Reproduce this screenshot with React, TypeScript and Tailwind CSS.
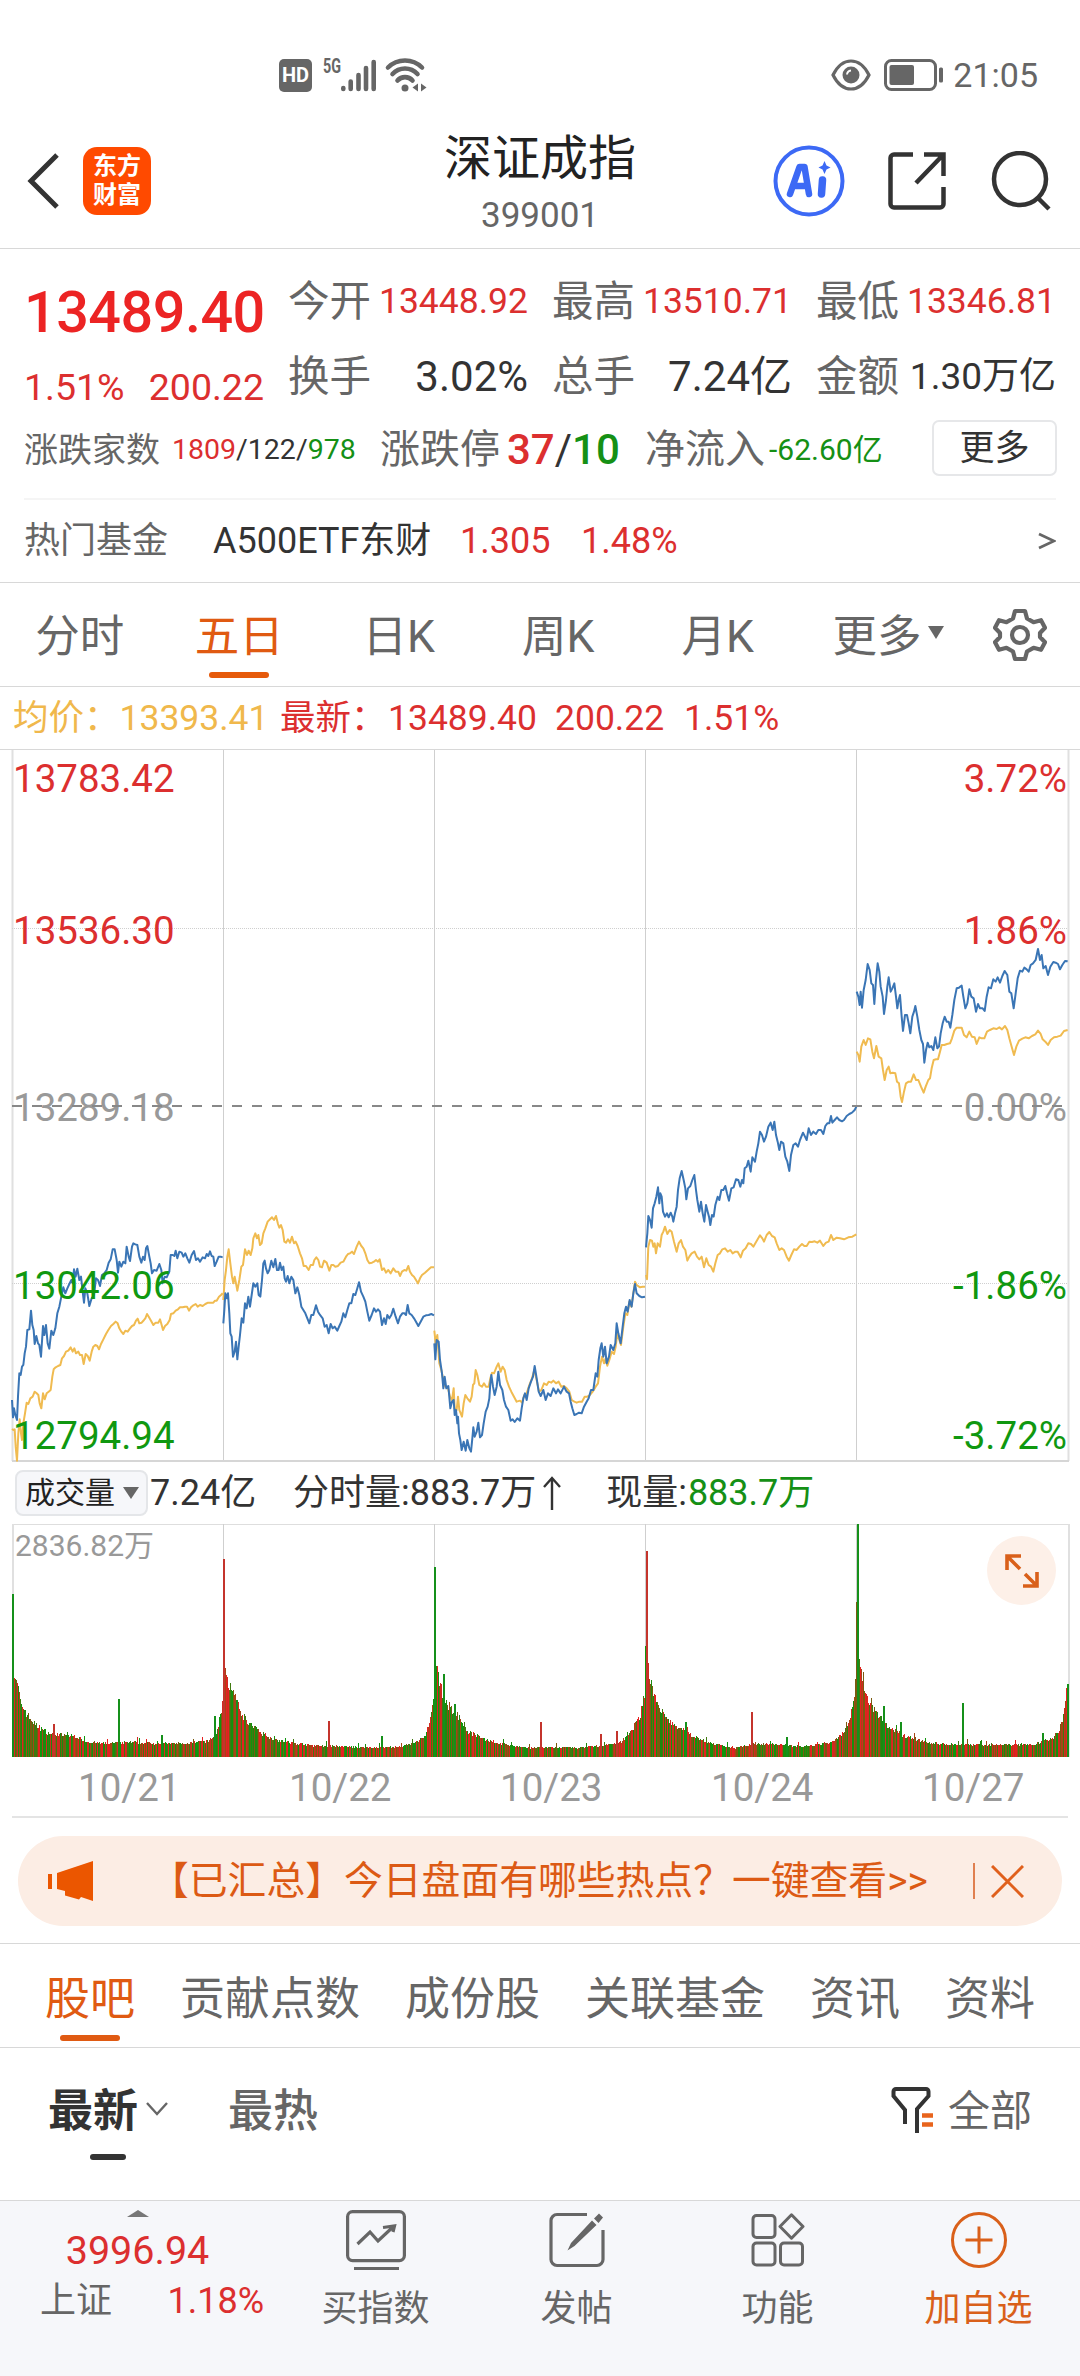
import React from "react";

const FONT = 'Roboto, "Noto Sans CJK SC", sans-serif';

type Segment = { x: number; y: number; price: string; avg: string };

/* Each trading day: intraday price and running average, in third-pixel units. */
const SEGMENTS: Segment[] = [
  {
    x: 0,
    y: 331,
    price:
      "36,960 39,1012 42,985 46,1005 51,1020 54,950 58,880 62,885 66,860 70,855 74,820 78,800 82,750 88,748 93,692 97,735 101,750 104,792 109,768 114,790 118,795 123,830 129,738 133,765 138,735 143,790 148,806 154,752 160,765 166,745 172,700 178,680 184,650 190,622 196,640 202,625 208,612 214,600 218,610 222,568 227,590 232,566 238,600 243,590 248,635 252,668 256,625 262,640 268,678 275,655 282,645 288,595 294,600 300,618 306,585 313,580 320,570 326,548 332,538 338,508 344,508 350,540 354,578 358,545 364,560 370,545 376,550 380,500 386,530 390,543 396,500 400,490 406,493 412,495 418,530 424,548 429,530 434,540 438,505 442,498 448,530 452,550 456,580 462,570 470,572 478,552 484,570 488,610 494,590 500,592 508,575 512,525 518,525 523,528 527,512 532,535 538,515 545,518 550,530 556,520 562,535 568,548 575,525 582,513 588,540 594,535 600,545 608,532 615,535 620,522 625,528 630,514 635,528 640,530 644,558 650,545 656,530 662,530 668,532",
    avg:
      "36,1047 40,1050 44,1048 47,1100 51,1142 55,1060 59,1018 63,1060 66,1080 70,1030 75,1000 80,968 85,972 91,955 98,950 104,935 110,940 115,945 119,970 124,985 129,940 134,958 140,940 146,935 152,930 157,890 161,868 167,862 174,858 181,855 186,835 192,828 198,815 205,812 212,802 218,815 223,805 228,820 235,815 240,825 246,825 251,852 257,822 263,828 269,842 275,815 280,800 286,795 292,798 297,808 303,792 310,778 318,762 325,750 333,738 340,732 347,725 353,730 358,745 364,755 370,762 376,752 383,755 390,745 396,738 402,735 408,722 413,716 418,730 425,728 432,720 436,715 441,702 447,712 453,722 460,735 467,728 475,728 480,718 485,735 489,750 495,738 502,732 509,720 513,702 520,700 527,692 534,688 540,682 548,682 555,680 561,680 567,692 573,682 580,676 587,672 593,680 600,675 608,678 616,672 624,668 632,668 640,668 645,662 650,662 657,650 663,645 668,640",
  },
  {
    x: 0,
    y: 331,
    price:
      "670,730 673,690 676,640 680,655 684,640 688,700 691,760 695,770 699,830 704,815 708,785 712,838 716,800 720,765 725,715 730,728 735,670 740,685 745,650 750,680 755,645 760,610 766,620 772,610 776,645 781,650 786,600 790,550 794,542 798,565 803,580 808,570 814,542 820,562 826,537 831,570 836,570 840,548 845,570 850,560 854,595 858,605 863,588 868,610 874,590 880,600 886,640 892,622 898,645 904,680 910,690 916,700 922,715 928,730 934,705 940,705 948,676 954,695 960,705 968,715 974,740 980,735 986,760 992,732 998,745 1004,740 1012,752 1018,738 1024,725 1030,700 1036,712 1042,690 1048,670 1054,670 1060,642 1066,645 1072,625 1077,607 1083,635 1090,650 1096,665 1102,695 1108,722 1115,705 1122,685 1128,695 1134,688 1140,695 1146,735 1152,715 1157,732 1162,705 1168,715 1174,705 1180,686 1187,710 1194,730 1200,710 1207,700 1213,700 1218,705 1223,675 1228,700 1235,705 1242,715 1248,725 1255,738 1262,725 1270,710 1278,706 1286,705 1294,702 1302,706",
    avg:
      "670,660 674,600 678,570 682,530 686,508 691,550 696,590 700,610 704,590 708,610 712,632 718,600 724,560 729,555 735,508 741,525 746,512 752,525 757,505 760,475 766,460 771,475 775,465 780,495 785,490 790,460 796,445 803,425 810,418 816,412 822,420 828,408 834,432 838,443 843,435 848,450 853,485 858,488 864,478 870,488 876,470 882,490 887,485 893,498 900,520 906,535 911,558 918,558 926,570 932,555 939,555 943,540 949,532 955,540 960,560 966,562 972,542 980,548 988,572 994,555 1000,555 1006,560 1014,558 1022,548 1030,545 1038,530 1044,522 1050,520 1056,515 1062,522 1070,500 1077,485 1084,498 1090,505 1096,520 1102,540 1108,550 1116,548 1122,545 1128,540 1134,545 1139,538 1146,570 1152,565 1158,578 1165,570 1172,580 1180,565 1187,575 1195,575 1200,588 1206,575 1213,570 1219,572 1225,558 1230,575 1236,585 1242,590 1248,600 1254,610 1260,595 1266,585 1275,578 1284,570 1293,562 1302,562",
  },
  {
    x: 420,
    y: 331,
    price:
      "43,790 46,838 50,780 56,785 60,840 66,880 70,925 74,890 79,925 85,918 91,985 96,965 101,960 104,1005 108,990 112,1030 114,1010 117,1060 121,1080 125,1110 131,1085 137,1112 142,1080 148,1105 153,1115 157,1075 160,1042 164,1070 170,1055 175,1028 180,1072 186,1065 191,1030 197,995 203,980 208,955 211,910 214,885 219,920 224,945 230,920 235,875 240,915 247,930 252,960 258,980 265,990 272,1022 278,1018 284,1026 292,1015 300,1022 305,985 310,955 315,940 320,960 326,925 333,905 339,890 344,858 350,895 356,935 362,948 370,930 377,960 384,940 392,948 400,925 408,940 414,928 422,940 432,920 440,935 447,940 452,965 457,985 463,1005 470,1002 477,998 485,1000 492,980 500,965 506,955 513,930 520,930 527,880 532,890 536,840 541,805 545,790 550,830 555,800 560,850 567,830 572,795 580,810 586,790 590,730 595,760 602,790 608,740 613,700 618,680 623,695 629,660 635,680 640,640 645,612 650,640 658,648 666,652 675,650",
    avg:
      "43,752 47,790 52,765 58,850 64,870 70,900 76,920 84,925 90,950 96,960 101,925 104,985 110,990 114,950 118,990 126,1010 131,970 136,945 142,955 150,965 155,950 159,915 163,910 167,870 172,885 178,915 186,920 192,910 198,920 206,920 211,895 216,878 222,880 230,860 235,850 242,875 248,860 254,870 260,900 267,920 274,935 282,950 290,965 300,962 306,968 313,945 320,940 328,915 336,895 343,870 350,900 357,935 364,930 372,910 380,915 386,905 394,908 400,902 408,910 416,905 424,920 432,918 440,925 448,935 455,960 463,965 470,968 478,965 486,965 494,950 502,950 510,945 518,935 527,920 534,910 540,860 546,830 552,850 557,835 562,857 568,840 575,815 582,822 587,800 592,760 598,780 603,795 610,740 616,700 622,705 628,665 634,680 640,640 645,605 650,615 660,622 668,620 675,620",
  },
  {
    x: 420,
    y: 331,
    price:
      "678,502 682,460 685,408 690,420 695,443 699,385 704,370 709,350 714,322 718,370 721,340 725,350 729,395 735,410 741,400 746,412 752,398 757,410 760,425 765,400 770,380 774,330 779,295 785,273 791,300 796,325 799,358 804,325 811,318 817,300 823,285 828,330 832,360 838,395 843,365 848,400 853,425 858,375 863,395 867,410 871,435 876,405 881,410 886,375 893,350 898,360 904,330 910,330 916,318 921,340 927,362 934,325 941,322 948,298 955,300 961,320 966,300 970,310 974,265 980,260 985,242 992,275 997,232 1005,245 1010,215 1015,190 1020,155 1026,165 1032,185 1038,170 1045,140 1052,128 1058,150 1063,125 1068,165 1073,185 1078,210 1083,185 1090,190 1096,230 1102,245 1108,273 1113,225 1120,195 1127,190 1134,200 1140,180 1149,158 1155,170 1160,180 1166,145 1173,165 1180,155 1188,162 1195,150 1203,150 1210,162 1216,138 1222,130 1228,130 1233,108 1237,128 1244,120 1251,112 1258,120 1266,124 1272,120 1280,108 1288,102 1296,98 1304,90 1309,80",
    avg:
      "678,585 681,598 685,500 690,480 696,482 700,500 704,490 708,520 713,490 720,500 725,465 730,455 735,440 742,462 749,450 755,455 762,485 770,515 776,490 783,480 789,500 796,510 802,542 808,530 815,520 824,515 831,530 838,538 845,530 852,562 859,535 866,555 873,560 880,575 886,550 893,525 900,520 907,508 915,505 923,515 931,510 938,520 946,515 953,515 962,532 969,512 977,505 985,490 993,492 1000,500 1006,490 1013,478 1020,466 1027,475 1032,485 1040,465 1048,456 1056,468 1064,472 1070,490 1078,510 1085,505 1092,510 1100,530 1107,542 1114,525 1122,508 1130,510 1138,500 1146,492 1153,498 1160,498 1168,485 1176,486 1184,484 1192,488 1200,482 1210,498 1218,488 1226,485 1233,465 1240,480 1250,473 1260,475 1272,478 1285,472 1297,470 1309,463",
  },
  {
    x: 640,
    y: 151,
    price:
      "650,275 655,290 659,315 662,275 666,323 671,270 677,240 683,192 689,210 694,250 699,255 703,312 708,240 713,190 718,215 722,260 728,290 732,342 738,300 742,260 746,232 752,275 757,265 763,250 768,290 772,325 776,300 780,285 785,350 789,393 795,345 801,345 806,370 811,400 817,350 822,335 826,318 832,350 838,390 844,420 849,432 853,488 858,450 863,428 868,442 874,438 880,450 886,412 892,445 897,440 902,400 908,370 914,350 920,365 926,365 931,383 937,345 943,300 950,265 957,263 965,257 970,290 976,325 982,310 988,268 994,290 1001,295 1008,335 1014,312 1020,325 1028,325 1034,333 1040,290 1046,262 1053,265 1060,238 1067,245 1073,232 1080,248 1087,228 1094,213 1102,225 1108,275 1114,280 1121,325 1127,280 1133,235 1140,212 1147,215 1153,203 1160,208 1166,215 1172,195 1179,190 1187,180 1194,147 1200,180 1205,165 1210,205 1217,198 1224,225 1231,200 1240,186 1247,188 1254,192 1260,208 1267,195 1275,183 1283,184",
    avg:
      "650,455 655,465 659,485 664,440 671,420 677,435 684,415 691,418 697,455 702,475 709,438 716,470 724,475 729,510 734,540 740,510 746,500 751,520 758,518 766,520 771,545 777,550 782,590 786,606 792,575 798,550 806,545 813,545 821,523 828,540 835,540 843,560 851,578 857,560 865,540 870,535 875,505 881,480 888,478 894,478 900,455 905,435 913,435 921,432 930,430 936,415 943,392 950,383 958,383 965,383 972,405 980,412 988,395 996,410 1004,412 1010,432 1018,412 1025,415 1033,415 1041,395 1050,390 1060,385 1070,387 1078,382 1086,388 1095,378 1102,390 1108,415 1115,440 1122,465 1129,440 1137,422 1147,416 1156,412 1166,415 1176,408 1186,403 1194,392 1202,402 1208,418 1216,425 1224,435 1232,420 1242,412 1252,410 1262,407 1272,393 1283,390",
  },
];

const GRID_X = [12, 223, 434, 645, 856, 1068];

/* Volume envelope per day: [offset from day start, bar height]. */
const ENVELOPES: number[][][] = [
  [[0, 91], [2, 79], [4, 70], [6, 66], [8, 52], [12, 46], [16, 39], [24, 30], [36, 23], [50, 21], [62, 20], [74, 15], [90, 13], [120, 14], [150, 13], [175, 13], [195, 15], [204, 22], [209, 45], [211, 60]],
  [[0, 110], [2, 90], [4, 74], [8, 65], [12, 55], [18, 42], [26, 32], [36, 24], [48, 18], [65, 14], [90, 11], [120, 10], [150, 9], [178, 10], [192, 14], [202, 20], [207, 36], [211, 57]],
  [[0, 105], [2, 86], [4, 75], [8, 62], [12, 52], [18, 45], [26, 37], [34, 24], [48, 18], [65, 13], [90, 9], [120, 9], [150, 9], [175, 12], [190, 16], [200, 30], [206, 40], [211, 66]],
  [[0, 118], [2, 100], [4, 80], [8, 60], [14, 47], [20, 37], [30, 30], [42, 23], [55, 17], [70, 12], [90, 9], [110, 13], [130, 12], [160, 10], [185, 14], [199, 24], [206, 42], [211, 77]],
  [[0, 163], [1, 111], [3, 97], [6, 76], [10, 60], [15, 50], [22, 40], [32, 29], [46, 21], [60, 17], [75, 13], [105, 12], [140, 12], [175, 12], [195, 17], [203, 25], [208, 45], [211, 70]],
];

/* Isolated volume spikes: [x, height, is up]. */
const SPIKES: [number, number, boolean][] = [
  [12, 163, false], [118, 58, false], [161, 22, false], [214, 41, false], [53, 33, true],
  [223, 198, true], [328, 36, true], [381, 21, false], [236, 57, false],
  [434, 190, false], [443, 83, false], [454, 53, false], [540, 35, true], [600, 23, true], [616, 26, true],
  [646, 206, true], [685, 35, false], [751, 45, true], [786, 20, false],
  [857, 233, false], [883, 51, false], [900, 35, false], [962, 54, false], [1042, 24, false], [1067, 73, false],
];

function envelopeAt(points: number[][], d: number) {
  for (let i = 1; i < points.length; i++) {
    const [x0, h0] = points[i - 1];
    const [x1, h1] = points[i];
    if (d <= x1) return h0 + ((h1 - h0) * (d - x0)) / (x1 - x0);
  }
  return points[points.length - 1][1];
}

function buildVolume() {
  const bars: { x: number; h: number; c: string }[] = [];
  let seed = 7;
  const rand = () => {
    seed = (seed * 16807) % 2147483647;
    return seed / 2147483647;
  };
  const colors = ["#d02a20", "#0f960c", "#7a5a10", "#a84416", "#3f7a10", "#e62020", "#1c8a0e"];
  ENVELOPES.forEach((env, day) => {
    for (let d = 0; d < 211; d++) {
      const h = envelopeAt(env, d) * (0.94 + rand() * 0.2) + (rand() > 0.93 ? 4 : 0);
      bars.push({ x: 12 + day * 211 + d, h, c: colors[Math.floor(rand() * colors.length)] });
    }
  });
  return bars;
}

const VOLUME = buildVolume();

function StatusBar() {
  return (
    <div className="flex h-[110px] items-center pt-[40px] pl-[279px] pr-[42px] text-[#666]">
      <div className="flex h-[33px] w-[33px] items-center justify-center rounded-[5px] bg-[#666] text-[20px] leading-none font-bold text-white">
        HD
      </div>
      <svg className="ml-[11px]" width="105" height="40" viewBox="0 0 105 40" fill="none">
        <text x="0" y="17.5" fontSize="20" fontWeight="700" fill="#666" textLength="18" lengthAdjust="spacingAndGlyphs">
          5G
        </text>
        <g stroke="#666" strokeWidth="4.6" strokeLinecap="round">
          <path d="M20.3 33v1M27.7 26.500v7.500M35.500 20v14M43 13v21M50.700 7v27" />
          <path d="M65 12.500a24 24 0 0 1 34 0M69.500 19a17 17 0 0 1 25 0M74.500 25.500a10 10 0 0 1 15 0" />
        </g>
        <circle cx="82" cy="33" r="3.500" fill="#666" />
        <path d="M95 28.500v8l-5.500-4zM98 28.500v8l5.500-4z" fill="#666" />
      </svg>
      <div className="flex-1" />
      <svg width="40" height="32" viewBox="0 0 40 32" fill="none" stroke="#666" strokeWidth="3.200">
        <path d="M2 16C7 6 13 2 20 2s13 4 18 14c-5 10-11 14-18 14S7 26 2 16z" />
        <circle cx="20" cy="16" r="8.500" fill="#666" stroke="none" />
        <path d="M16 15.500a4.500 4.500 0 0 1 4-4" stroke="#fff" strokeWidth="2" />
      </svg>
      <svg className="ml-[13px]" width="60" height="32" viewBox="0 0 60 32" fill="none">
        <rect x="1.500" y="1.500" width="50" height="29" rx="6" stroke="#666" strokeWidth="3" />
        <rect x="5.500" y="6" width="24.500" height="20" rx="2" fill="#666" />
        <rect x="55" y="8.500" width="4" height="15" rx="1.500" fill="#666" />
      </svg>
      <span className="ml-[9px] text-[34px] leading-none">21:05</span>
    </div>
  );
}

function Header() {
  return (
    <div className="flex h-[139px] border-b border-[#d8d8d8]">
      <div className="flex w-[320px] items-center pt-[4px] pl-[27px]">
        <svg width="33" height="56" viewBox="0 0 33 56" fill="none" stroke="#333" strokeWidth="5">
          <path d="M30 2L4 28l26 26" />
        </svg>
        <div className="ml-[23px] flex h-[68px] w-[68px] flex-col items-center justify-center rounded-[14px] bg-[#ff4a00] text-[24px] leading-[29px] font-bold text-white">
          <span>东方</span>
          <span>财富</span>
        </div>
      </div>
      <div className="flex flex-1 flex-col items-center pt-[24px]">
        <div className="h-[50px] text-[48px] leading-[50px] text-[#222]">深证成指</div>
        <div className="mt-[11px] text-[35px] leading-[42px] text-[#666]">399001</div>
      </div>
      <div className="flex w-[320px] items-center justify-end pt-[4px] pr-[29px]">
        <svg width="72" height="72" viewBox="0 0 72 72" fill="none">
          <circle cx="36" cy="36" r="33.500" stroke="#3c69f5" strokeWidth="4" />
          <path d="M17 49L26.500 22h5L36 49M20.500 41h13" stroke="#3c69f5" strokeWidth="6.500" strokeLinejoin="round" strokeLinecap="round" />
          <path d="M49.500 35l-1 14" stroke="#3c69f5" strokeWidth="7.500" strokeLinecap="round" />
          <path d="M51.500 16l2 4.500 4 2-4 2-2 4.500-2-4.500-4-2 4-2z" fill="#3c69f5" />
        </svg>
        <svg className="ml-[43px]" width="58" height="58" viewBox="0 0 58 58" fill="none" stroke="#333" strokeWidth="4.500">
          <path d="M25 2.500H6a3.500 3.500 0 0 0-3.500 3.500v46A3.500 3.500 0 0 0 6 55.500h46a3.500 3.500 0 0 0 3.500-3.500V35" />
          <path d="M28 31L54 4M36 2.500h19.500V24" />
        </svg>
        <svg className="ml-[45px]" width="60" height="60" viewBox="0 0 60 60" fill="none" stroke="#333" strokeWidth="4.500">
          <circle cx="29" cy="28" r="26" />
          <path d="M47 47l11 11" />
        </svg>
      </div>
    </div>
  );
}

function Metric({ label, value, tone }: { label: string; value: string; tone: string }) {
  return (
    <div className="flex h-[75px] w-[240px] items-center justify-between whitespace-nowrap">
      <span className="text-[41.500px] leading-none text-[#666]">{label}</span>
      <span className={tone}>{value}</span>
    </div>
  );
}

function Quote() {
  const red = "text-[35.500px] leading-none text-[#dc2f2f]";
  const dark = "text-[42px] leading-none text-[#333]";
  return (
    <div className="h-[334px] border-b border-[#d8d8d8] pt-[15px]">
      <div className="flex pl-[24px]">
        <div className="w-[264px] pt-[17px]">
          <div className="text-[57.500px] leading-[64px] font-medium tracking-[-0.5px] text-[#ec2424]">13489.40</div>
          <div className="mt-[22px] flex w-[240px] justify-between text-[37.500px] leading-[40px] text-[#dc2f2f]">
            <span>1.51%</span>
            <span>200.22</span>
          </div>
        </div>
        <div className="grid grid-cols-3 gap-x-[24px]">
          <Metric label="今开" value="13448.92" tone={red} />
          <Metric label="最高" value="13510.71" tone={red} />
          <Metric label="最低" value="13346.81" tone={red} />
          <Metric label="换手" value="3.02%" tone={dark} />
          <Metric label="总手" value="7.24亿" tone={dark} />
          <Metric label="金额" value="1.30万亿" tone="text-[37px] leading-none text-[#333]" />
        </div>
      </div>
      <div className="flex h-[72px] items-center pr-[23px] pl-[24px] leading-none whitespace-nowrap text-[#333]">
        <span className="w-[148px] text-[34px] text-[#666]">涨跌家数</span>
        <span className="w-[208px] text-[28.500px]">
          <span className="text-[#dc2f2f]">1809</span>/122/<span className="text-[#159015]">978</span>
        </span>
        <span className="w-[127px] text-[40px] text-[#666]">涨跌停</span>
        <span className="w-[138px] text-[42px]">
          <span className="font-medium text-[#dc2f2f]">37</span>/<span className="font-medium text-[#159015]">10</span>
        </span>
        <span className="w-[124px] text-[40px] text-[#666]">净流入</span>
        <span className="text-[30px] text-[#159015]">-62.60亿</span>
        <div className="flex-1" />
        <div className="mb-[4px] flex h-[56px] w-[125px] items-center justify-center rounded-[7px] border-2 border-[#e6e7e9] text-[35px]">
          更多
        </div>
      </div>
      <div className="mx-[24px] mt-[12px] h-[2px] bg-[#f5f5f5]" />
      <div className="flex h-[82px] items-center pr-[24px] pl-[24px] text-[36px] leading-none whitespace-nowrap text-[#dc2f2f]">
        <span className="w-[189px] text-[#666]">热门基金</span>
        <span className="w-[247px] text-[#333]">A500ETF东财</span>
        <span className="w-[121px]">1.305</span>
        <span className="flex-1">1.48%</span>
        <svg width="18" height="18" viewBox="0 0 18 18" fill="none" stroke="#666" strokeWidth="2.800">
          <path d="M1 2l15 7-15 7" />
        </svg>
      </div>
    </div>
  );
}

function PeriodTabs() {
  const tabs = ["分时", "五日", "日K", "周K", "月K"];
  return (
    <div className="flex h-[104px] items-center border-b border-[#d8d8d8] text-[44.500px] leading-none text-[#666]">
      {tabs.map((t) => (
        <div key={t} className="relative flex h-full w-[159.500px] items-center justify-center pt-[6px]">
          <span className={t === "五日" ? "text-[#e05a12]" : ""}>{t}</span>
          {t === "五日" && <div className="absolute bottom-[8px] h-[6px] w-[60px] rounded-full bg-[#e65a0b]" />}
        </div>
      ))}
      <div className="flex h-full w-[195px] items-center pt-[6px] pl-[35px]">
        <span>更多</span>
        <svg className="mb-[10px] ml-[6px]" width="16" height="13" viewBox="0 0 16 13" fill="#666">
          <path d="M0 0h16L8 13z" />
        </svg>
      </div>
      <svg width="54" height="54" viewBox="0 0 54 54" fill="none" stroke="#666" strokeWidth="4.200" strokeLinejoin="round">
        <path d="M22 3h10l2 7.500 6.500 3.700 7.500-2 4 7.500-5 5.300v4l5 5.300-4 7.500-7.500-2-6.500 3.700-2 7.500H22l-2-7.500-6.500-3.700-7.500 2-4-7.500 5-5.300v-4l-5-5.300 4-7.500 7.500 2 6.500-3.700z" />
        <circle cx="27" cy="27" r="8" />
      </svg>
    </div>
  );
}

function ChartLegend() {
  return (
    <div className="flex h-[62px] items-center pt-[2px] pl-[13px] text-[35.500px] leading-none whitespace-pre text-[#dc2f2f]">
      <span className="w-[267px] text-[#f0b84c]">均价：13393.41</span>
      <span className="w-[108px]">最新：</span>
      <span className="w-[167px]">13489.40</span>
      <span className="w-[129px]">200.22</span>
      <span>1.51%</span>
    </div>
  );
}

function PriceChart() {
  const left = "absolute left-[13px] leading-[40px] text-[38.500px]";
  const right = "absolute right-[13px] leading-[40px] text-[38.500px]";
  return (
    <div className="relative h-[713px]">
      <svg className="block" width="1080" height="713" viewBox="0 0 1080 713" fill="none">
        <path d="M0 .5H1080" stroke="#d8d8d8" />
        {GRID_X.map((x, i) => (
          <path key={x} d={`M${x + 0.5} 1V712`} stroke={i === 0 || i === 5 ? "#e0e0e0" : "#cfcfcf"} strokeWidth={i === 0 || i === 5 ? 2 : 1} />
        ))}
        <path d="M12 179.500H1068M12 534.500H1068" stroke="#cfcfcf" strokeDasharray="1 1" />
        <path d="M12 712H1069" stroke="#d6d6d6" strokeWidth="2" />
        {SEGMENTS.map((s, i) => (
          <g key={i} transform={`translate(${s.x} ${s.y}) scale(0.33333)`} strokeWidth="6" strokeLinejoin="round">
            <polyline points={s.avg} stroke="#f0bb50" />
            <polyline points={s.price} stroke="#3a75b5" />
          </g>
        ))}
      </svg>
      <span className={`${left} top-[10px] text-[#dc2f2f]`}>13783.42</span>
      <span className={`${left} top-[162px] text-[#dc2f2f]`}>13536.30</span>
      <span className={`${left} top-[339px] text-[#999]`}>13289.18</span>
      <span className={`${left} top-[517px] text-[#109810]`}>13042.06</span>
      <span className={`${left} top-[667px] text-[#109810]`}>12794.94</span>
      <span className={`${right} top-[10px] text-[#dc2f2f]`}>3.72%</span>
      <span className={`${right} top-[162px] text-[#dc2f2f]`}>1.86%</span>
      <span className={`${right} top-[339px] text-[#999]`}>0.00%</span>
      <span className={`${right} top-[517px] text-[#109810]`}>-1.86%</span>
      <span className={`${right} top-[667px] text-[#109810]`}>-3.72%</span>
      <svg className="absolute top-[355px] left-0" width="1080" height="4" viewBox="0 0 1080 4">
        <path d="M12 2H1068" stroke="#888" strokeWidth="2" strokeDasharray="10 10" />
      </svg>
    </div>
  );
}

function VolumeSection() {
  return (
    <div>
      <div className="flex h-[62px] items-center pl-[15px] text-[36px] leading-none whitespace-pre text-[#333]">
        <div className="flex h-[46px] w-[133px] items-center rounded-[8px] border-2 border-[#e4e6e9] bg-[#f6f7fa] pl-[8px] text-[30px] text-[#222]">
          成交量
          <svg className="ml-[8px]" width="16" height="12" viewBox="0 0 16 12" fill="#666">
            <path d="M0 0h16L8 12z" />
          </svg>
        </div>
        <span className="ml-[2px] w-[143px]">7.24亿</span>
        <span>分时量:883.7万</span>
        <svg className="mr-[44px] ml-[6px]" width="20" height="34" viewBox="0 0 20 34" fill="none" stroke="#333" strokeWidth="2.400">
          <path d="M10 34V2M2 11l8-9 8 9" />
        </svg>
        <span>
          现量:<span className="ml-px text-[#159015]">883.7万</span>
        </span>
      </div>
      <div className="relative h-[234px]">
        <svg className="block" width="1080" height="234" viewBox="0 0 1080 234" fill="none" shapeRendering="crispEdges">
          <path d="M12 .5H1068" stroke="#dedede" />
          {GRID_X.map((x, i) => (
            <path key={x} d={`M${x + 0.5} 0V233`} stroke={i === 0 || i === 5 ? "#e0e0e0" : "#cfcfcf"} strokeWidth={i === 0 || i === 5 ? 2 : 1} />
          ))}
          {VOLUME.map((b) => (
            <rect key={b.x} x={b.x} y={233 - b.h} width="1" height={b.h} fill={b.c} />
          ))}
          {SPIKES.map(([x, h, up]) => (
            <rect key={x} x={x} y={233 - h} width="2" height={h} fill={up ? "#c4342c" : "#15901a"} />
          ))}
        </svg>
        <span className="absolute top-[7px] left-[15px] text-[30px] leading-[30px] text-[#999]">2836.82万</span>
        <div className="absolute top-[12px] left-[987px] flex h-[69px] w-[69px] items-center justify-center rounded-full bg-[#fdf0e8]">
          <svg width="34" height="34" viewBox="0 0 34 34" fill="none" stroke="#d9601a" strokeWidth="3.600">
            <path d="M2 16V2h14M2 2l13 13M32 18v14H18M32 32L20 20" />
          </svg>
        </div>
      </div>
      <div className="flex h-[58px] items-center pt-[3px] pl-[78px] text-[38.500px] leading-none text-[#999]">
        {["10/21", "10/22", "10/23", "10/24", "10/27"].map((d) => (
          <span key={d} className="w-[211px] shrink-0 last:w-auto">
            {d}
          </span>
        ))}
      </div>
      <div className="mx-[12px] h-[2px] bg-[#e4e4e4]" />
    </div>
  );
}

function Banner() {
  return (
    <div className="mx-[18px] mt-[18px] flex h-[90px] items-center rounded-full bg-[#fcede4] pl-[30px] leading-none text-[#dc5a14]">
      <svg width="46" height="40" viewBox="0 0 46 40" fill="#eb5600">
        <path d="M0 13h4v15H0zM9 12L45 0v40l-12-4-2 2.500-14-4V30l-8-2z" />
      </svg>
      <span className="ml-[56px] text-[38.800px] whitespace-nowrap">【已汇总】今日盘面有哪些热点？一键查看&gt;&gt;</span>
      <div className="flex-1" />
      <div className="h-[36px] w-[2px] bg-[#e08050]" />
      <svg className="mr-[38px] ml-[16px]" width="33" height="33" viewBox="0 0 33 33" fill="none" stroke="#e0601c" strokeWidth="3">
        <path d="M1 1l31 31M32 1L1 32" />
      </svg>
    </div>
  );
}

function ContentTabs() {
  return (
    <div className="mt-[17px] flex h-[105px] items-center gap-[45px] border-y border-[#d8d8d8] pt-[7px] pl-[45px] text-[45px] leading-none whitespace-nowrap text-[#666]">
      <div className="relative text-[#e05a12]">
        股吧
        <div className="absolute top-[58px] left-[15px] h-[6px] w-[60px] rounded-full bg-[#e05a12]" />
      </div>
      {["贡献点数", "成份股", "关联基金", "资讯", "资料"].map((t) => (
        <span key={t}>{t}</span>
      ))}
    </div>
  );
}

function SortRow() {
  return (
    <div className="flex h-[152px] items-start pt-[41px] pr-[48px] pl-[48px] text-[45px] leading-[46px] whitespace-nowrap text-[#666]">
      <div className="relative font-bold text-[#333]">
        最新
        <div className="absolute top-[65px] left-[42px] h-[6px] w-[36px] rounded-full bg-[#333]" />
      </div>
      <svg className="mt-[13px] ml-[8px]" width="22" height="14" viewBox="0 0 22 14" fill="none" stroke="#666" strokeWidth="2.400">
        <path d="M1 1l10 11L21 1" />
      </svg>
      <span className="ml-[60px] font-medium">最热</span>
      <div className="flex-1" />
      <svg className="mt-[-2px] mr-[14px]" width="43" height="46" viewBox="0 0 43 46" fill="none" stroke="#333" strokeWidth="4">
        <path d="M14 37V23L2.500 9V4.500A2.500 2.500 0 0 1 5 2h30a2.500 2.500 0 0 1 2.500 2.500V9L26 22v24" />
        <path d="M31 28.500h11M31 37.500h11" stroke="#e8641c" strokeWidth="4.500" />
      </svg>
      <span className="text-[42px]">全部</span>
    </div>
  );
}

function BottomItem({ label, tone, children }: { label: string; tone: string; children: React.ReactNode }) {
  return (
    <div className={`flex w-[201px] flex-col items-center pt-[9px] ${tone}`}>
      <div className="flex h-[60px] items-center">{children}</div>
      <span className="mt-[21px] text-[36px] leading-[36px]">{label}</span>
    </div>
  );
}

function BottomBar() {
  return (
    <div className="flex h-[176px] border-t border-[#d8d8d8] bg-[#f6f7fa] text-[#666]">
      <div className="flex w-[275px] flex-col items-center pt-[9px] leading-none">
        <svg width="22" height="7" viewBox="0 0 22 7" fill="#777">
          <path d="M11 0l11 7H0z" />
        </svg>
        <span className="mt-[14px] text-[39.500px] leading-[40px] text-[#dc2f2f]">3996.94</span>
        <div className="mt-[12px] ml-[29px] flex w-[224px] items-center justify-between text-[36px] leading-[36px]">
          <span>上证</span>
          <span className="text-[#dc2f2f]">1.18%</span>
        </div>
      </div>
      <BottomItem label="买指数" tone="">
        <svg width="60" height="60" viewBox="0 0 60 60" fill="none" stroke="#666" strokeWidth="3.200">
          <rect x="1.600" y="1.600" width="56.800" height="49" rx="5" />
          <path d="M11.500 34L24 22l8 9L48 16M37 17.500l11.500-1.500-1.500 6M8 58.500h45" />
        </svg>
      </BottomItem>
      <BottomItem label="发帖" tone="">
        <svg width="56" height="56" viewBox="0 0 56 56" fill="none" stroke="#666" strokeWidth="3.200">
          <path d="M38 2.500H8A6 6 0 0 0 2 8.500v39a6 6 0 0 0 6 6h40a6 6 0 0 0 6-6V18" />
          <path d="M50 1.500l4 4-4.500 5.500-4.500-4.500zM43 8.500l4.500 4.500-22 21-7 4.500 3.500-7.500z" fill="#666" stroke="none" />
        </svg>
      </BottomItem>
      <BottomItem label="功能" tone="">
        <svg width="54" height="54" viewBox="0 0 54 54" fill="none" stroke="#666" strokeWidth="3">
          <rect x="2" y="2.500" width="22" height="22" rx="3.500" />
          <rect x="2" y="30" width="22" height="22" rx="3.500" />
          <rect x="29.500" y="30" width="22" height="22" rx="3.500" />
          <path d="M40.500 1.800L52 13.500 40.500 25.200 29 13.500z" strokeLinejoin="round" />
        </svg>
      </BottomItem>
      <BottomItem label="加自选" tone="text-[#d9601a]">
        <svg width="58" height="58" viewBox="0 0 58 58" fill="none" stroke="#d9601a" strokeWidth="3">
          <circle cx="29" cy="29" r="26.500" />
          <path d="M29 15.500v27M15.500 29h27" />
        </svg>
      </BottomItem>
    </div>
  );
}

export default function App() {
  return (
    <div className="h-[2376px] w-[1080px] overflow-hidden bg-white" style={{ fontFamily: FONT }}>
      <StatusBar />
      <Header />
      <Quote />
      <PeriodTabs />
      <ChartLegend />
      <PriceChart />
      <VolumeSection />
      <Banner />
      <ContentTabs />
      <SortRow />
      <BottomBar />
    </div>
  );
}
